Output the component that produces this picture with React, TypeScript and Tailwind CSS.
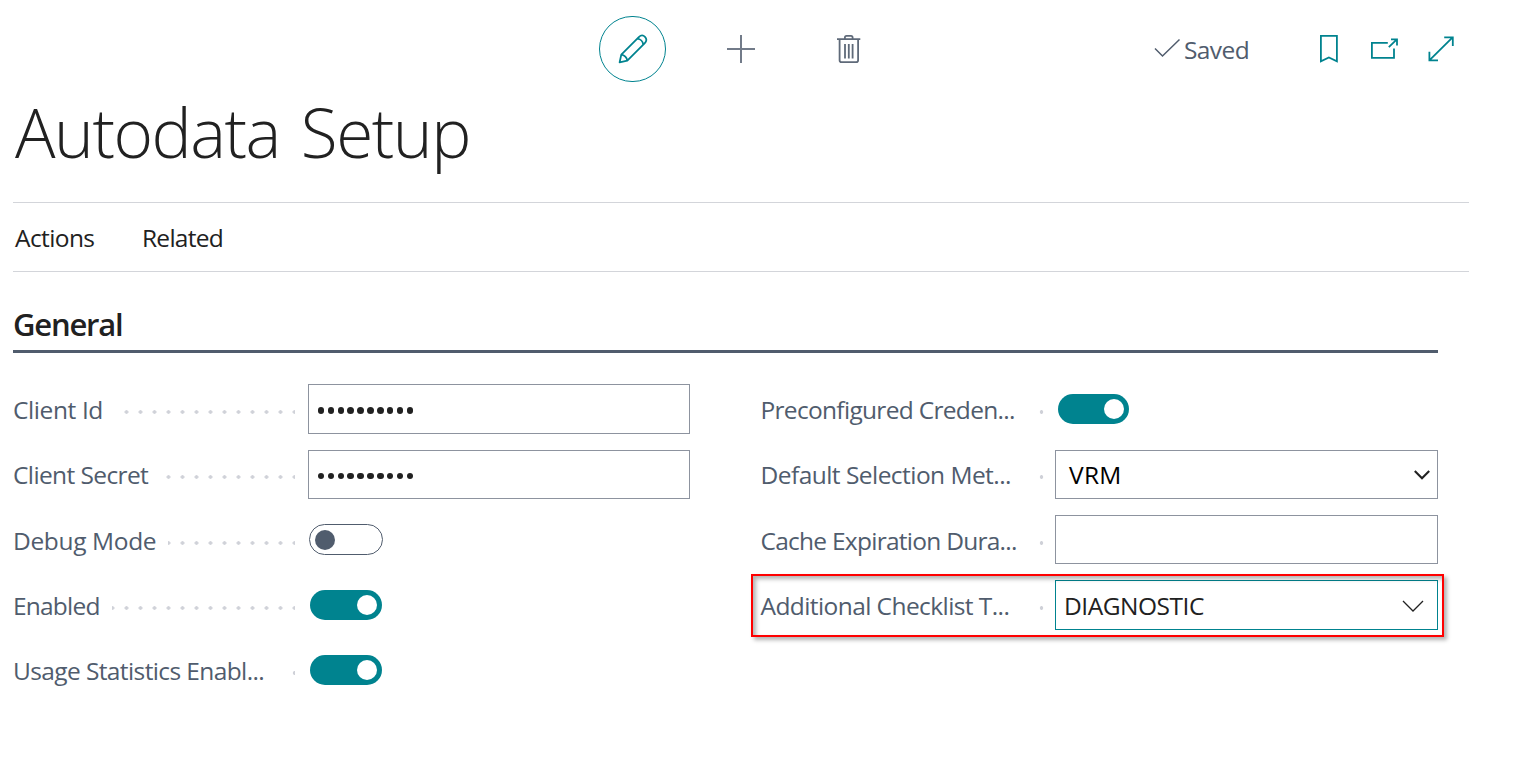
import type { ReactNode } from "react";

const dotsBase =
  "h-1 flex-1 bg-[radial-gradient(circle_at_center,#cfd1d8_1.5px,transparent_2.1px)] bg-[length:14px_4px]";

function Toggle({ on = false, width = "w-[72px]" }: { on?: boolean; width?: string }) {
  return on ? (
    <button className={`flex h-[30px] items-center justify-end rounded-full bg-[#00838f] pr-[5px] ${width}`}>
      <span className="size-5 rounded-full bg-white" />
    </button>
  ) : (
    <button className="flex h-[31px] w-[74px] items-center rounded-full border border-[#505c6d] pl-[5px]">
      <span className="size-5 rounded-full bg-[#505c6d]" />
    </button>
  );
}

function Field({
  label,
  tracking,
  dotsWidth = "w-[6px]",
  height = "h-[50px]",
  column = "left",
  children,
}: {
  label: string;
  tracking: string;
  dotsWidth?: string;
  height?: string;
  column?: "left" | "right";
  children: ReactNode;
}) {
  const isLeft = column === "left";
  return (
    <div className="flex items-start">
      <div
        className={`flex w-[295px] shrink-0 items-center justify-between ${height} ${isLeft ? "pr-[13px]" : "pl-[0.5px] pr-[11px]"}`}
      >
        <span className={`mt-[2px] whitespace-nowrap text-[24.5px] leading-8 text-[#505c6d] ${tracking}`}>
          {label}
        </span>
        <span className={`flex shrink-0 pt-[5px] ${dotsWidth}`}>
          <span
            className={`${dotsBase} ${isLeft ? "bg-[position:right_-6.5px_center]" : "bg-[position:right_-4.5px_center]"}`}
          />
        </span>
      </div>
      {children}
    </div>
  );
}

const box = "flex w-[383px] items-center justify-between border bg-white leading-8 text-[24.5px]";

function PasswordBox({ height }: { height: string }) {
  return (
    <div className={`flex w-[382px] items-center gap-[3.5px] border border-[#8d939f] pl-[8.8px] ${height}`}>
      {Array.from({ length: 10 }, (_, i) => (
        <span key={i} className="mt-[3px] size-[6.4px] rounded-full bg-[#212121]" />
      ))}
    </div>
  );
}

export default function App() {
  return (
    <main className="h-[759px] w-[1518px] overflow-hidden bg-white pl-[13px] font-['Open_Sans','Noto_Sans',sans-serif] font-[370] text-[#212121]">
      <header className="flex h-[98px] items-center pl-[586px] text-[#505c6d]">
        <button className="flex h-[66px] w-[67px] items-center justify-center rounded-full border border-[#00838f] text-[#00838f]">
          <svg width="30" height="30" viewBox="0 0 30 30" fill="none" stroke="currentColor" strokeWidth="1.8" strokeLinejoin="round">
            <path d="M1.6 28.4 3.3 20.6 20.8 3.1C22.7 1.2 25.2 1 27 2.8c1.9 1.9 1.7 4.5-.2 6.4L9.3 26.7Z" />
            <path d="M3.3 20.6c2.9.2 5.9 3.2 6 6.1M19.3 4.6c3 .4 5.7 3 6 6" />
          </svg>
        </button>
        <svg className="ml-[60px] text-[#727b89]" width="30" height="30" viewBox="0 0 30 30" stroke="currentColor" strokeWidth="2">
          <path d="M1 15H29M15 1V29" />
        </svg>
        <svg className="ml-[80px] text-[#5f6a79]" width="26" height="30" viewBox="0 0 26 30" fill="none" stroke="currentColor" strokeWidth="1.8">
          <path d="M1 5.2H24.3M3.6 5.2V26.3Q3.6 28.2 5.5 28.2H20.2Q22.1 28.2 22.1 26.3V5.2M8.9 5V3.4Q8.9 1.8 10.5 1.8H15Q16.6 1.8 16.6 3.4V5M9 10V24.5M12.8 10V24.5M16.6 10V24.5" />
        </svg>
        <svg className="ml-[292px]" width="28" height="22" viewBox="0 0 28 22" fill="none" stroke="currentColor" strokeWidth="1.5">
          <path d="M1 10.5 8.5 18 25.5 1.5" />
        </svg>
        <span className="mt-[2px] ml-[2px] w-[66px] text-[24.5px] tracking-[-0.6px]">Saved</span>
        <div className="ml-[69px] flex items-center text-[#00838f]">
          <svg width="20" height="30" viewBox="0 0 20 30" fill="none" stroke="currentColor" strokeWidth="1.8">
            <path d="M1.9 1.9H17.9V27.4L9.9 23.5 1.9 27.4Z" />
          </svg>
          <svg className="ml-[31px]" width="30" height="24" viewBox="0 0 30 24" fill="none" stroke="currentColor" strokeWidth="1.8">
            <path d="M17.8 5.9H1.9V20.8H24V11.5M18.8 10.2 26.6 2.6M21 2.4H27V8.6" />
          </svg>
          <svg className="ml-[27px]" width="28" height="28" viewBox="0 0 28 28" fill="none" stroke="currentColor" strokeWidth="1.8">
            <path d="M2.6 25.2 25.6 2.4M17.2 2.3H25.8V10.9M2.4 16.8V25.4H11" />
          </svg>
        </div>
      </header>

      <h1 className="h-[104px] whitespace-nowrap pl-[2px] text-[67.5px] leading-[69px] font-light tracking-[-1.5px] [word-spacing:5px]">
        Autodata Setup
      </h1>

      <nav className="flex h-[70px] w-[1456px] items-center border-y border-[#d3d5da] pt-[2px] pl-[2px] text-[24.5px]">
        <span className="w-[127px] tracking-[-0.6px]">Actions</span>
        <span className="tracking-[-0.75px]">Related</span>
      </nav>

      <section className="w-[1425px]">
        <h2 className="flex h-[81px] items-end border-b-[3px] border-[#505c6d] pb-[5px] text-[31px] leading-[42px] font-semibold tracking-[-1.2px]">
          General
        </h2>
        <div className="flex items-start justify-between pt-[31px]">
          <div className="grid w-[677px] grid-rows-[66px_65px_65px_65px_65px]">
            <Field label="Client Id" tracking="tracking-[-0.4px]" dotsWidth="w-[175px]">
              <PasswordBox height="h-[50px]" />
            </Field>
            <Field label="Client Secret" tracking="tracking-[-0.61px]" dotsWidth="w-[133px]" height="h-[48px]">
              <PasswordBox height="h-[49px]" />
            </Field>
            <Field label="Debug Mode" tracking="tracking-[-0.35px]" dotsWidth="w-[127px]">
              <div className="ml-[1px] mt-[9px]"><Toggle /></div>
            </Field>
            <Field label="Enabled" tracking="tracking-[-0.8px]" dotsWidth="w-[183px]">
              <div className="ml-[2px] mt-[10px]"><Toggle on /></div>
            </Field>
            <Field label="Usage Statistics Enabl..." tracking="tracking-[-0.61px]" dotsWidth="w-[5px]">
              <div className="ml-[2px] mt-[10px]"><Toggle on /></div>
            </Field>
          </div>

          <div className="relative grid w-[678px] grid-rows-[66px_65px_65px_65px]">
            <Field label="Preconfigured Creden..." tracking="tracking-[-0.69px]" column="right">
              <div className="ml-[3px] mt-[10px]"><Toggle on width="w-[71px]" /></div>
            </Field>
            <Field label="Default Selection Met..." tracking="tracking-[-0.54px]" column="right" height="h-[48px]">
              <div className={`${box} h-[49px] border-[#8d939f] pl-[13px] pr-[6px] text-black`}>
                <span className="tracking-[0.3px]">VRM</span>
                <svg width="18" height="12" viewBox="0 0 18 12" fill="none" stroke="#212121" strokeWidth="2.1">
                  <path d="M1.8 2 9 9.2 16.2 2" />
                </svg>
              </div>
            </Field>
            <Field label="Cache Expiration Dura..." tracking="tracking-[-0.74px]" column="right">
              <div className={`${box} h-[49px] border-[#8d939f]`} />
            </Field>
            <Field label="Additional Checklist T..." tracking="tracking-[-0.58px]" column="right">
              <div className={`${box} h-[50px] border-[#00838f] pl-[8px] pr-[13px]`}>
                <span className="mt-[2px] tracking-[-0.47px]">DIAGNOSTIC</span>
                <svg className="mt-[1px]" width="22" height="14" viewBox="0 0 22 14" fill="none" stroke="#212121" strokeWidth="1.3">
                  <path d="M1 2 11 12 21 2" />
                </svg>
              </div>
            </Field>
            <div className="pointer-events-none absolute -left-[9px] top-[190px] h-[63px] w-[693px] border-2 border-[#ff0000] shadow-[3px_3px_4px_rgba(0,0,0,0.3),inset_3px_3px_4px_rgba(0,0,0,0.3)]" />
          </div>
        </div>
      </section>
    </main>
  );
}
